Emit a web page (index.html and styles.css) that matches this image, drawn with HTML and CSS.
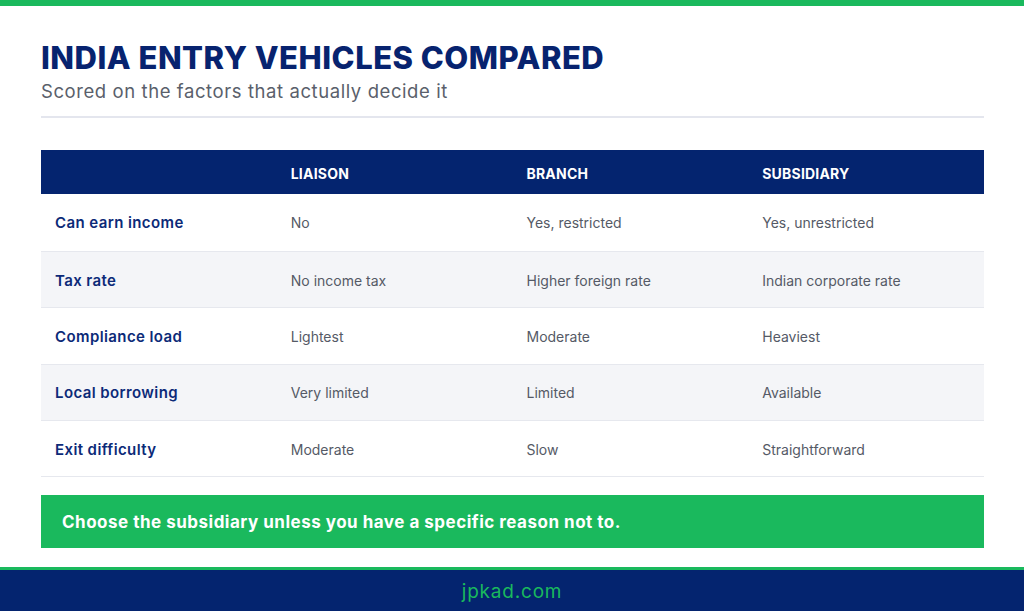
FILE: index.html
```html
<!DOCTYPE html>
<html lang="en">
<head>
<meta charset="utf-8">
<title>India Entry Vehicles Compared</title>
<link rel="stylesheet" href="styles.css">
</head>
<body>
<div class="page">
  <div class="topbar"></div>
  <main class="content">
    <header class="head">
      <h1 class="title">INDIA ENTRY VEHICLES COMPARED</h1>
      <p class="subtitle">Scored on the factors that actually decide it</p>
    </header>
    <table class="grid">
      <thead>
        <tr><th></th><th>LIAISON</th><th>BRANCH</th><th>SUBSIDIARY</th></tr>
      </thead>
      <tbody>
        <tr><td class="label">Can earn income</td><td>No</td><td>Yes, restricted</td><td>Yes, unrestricted</td></tr>
        <tr><td class="label">Tax rate</td><td>No income tax</td><td>Higher foreign rate</td><td>Indian corporate rate</td></tr>
        <tr><td class="label">Compliance load</td><td>Lightest</td><td>Moderate</td><td>Heaviest</td></tr>
        <tr><td class="label">Local borrowing</td><td>Very limited</td><td>Limited</td><td>Available</td></tr>
        <tr><td class="label">Exit difficulty</td><td>Moderate</td><td>Slow</td><td>Straightforward</td></tr>
      </tbody>
    </table>
    <div class="callout">Choose the subsidiary unless you have a specific reason not to.</div>
  </main>
  <footer class="footer">jpkad.com</footer>
</div>
</body>
</html>
```

FILE: styles.css
```css
* { box-sizing: border-box; }
html, body { margin: 0; padding: 0; background: #ffffff; }
body { font-family: Inter, "Noto Sans", sans-serif; }
.page { width: 1024px; height: 611px; display: flex; flex-direction: column; overflow: hidden; }
.topbar { height: 6px; background: #1ab95d; flex: none; }
.content { padding: 0 40px 0 41px; flex: 1; }
.head { padding-top: 33px; padding-bottom: 13px; border-bottom: 2px solid #e4e6ee; }
.title { margin: 0; font-size: 31px; line-height: 38px; font-weight: 800; color: #07236f; letter-spacing: 0.5px; }
.subtitle { margin: 2px 0 0; font-size: 18.5px; line-height: 24px; color: #5a5f6b; font-weight: 400; letter-spacing: 0.58px; }
.grid { margin-top: 32px; width: 943px; border-collapse: collapse; table-layout: fixed; }
.grid th { background: #04246f; color: #ffffff; font-size: 14px; font-weight: 700; text-align: left; height: 44px; padding: 3px 14px 0; letter-spacing: 0.2px; }
.grid td { height: 56.4px; padding: 1px 14px 0; font-size: 14px; color: #555a66; border-bottom: 1px solid #e6e8ee; }
.grid tbody tr:first-child td { height: 57.4px; }
.grid tbody tr:nth-child(even) td { background: #f4f5f8; }
.grid td.label { font-size: 15px; font-weight: 600; color: #0c2a78; letter-spacing: 0.4px; }
.callout { margin-top: 18px; height: 53px; background: #1ab95d; color: #ffffff; font-size: 17px; font-weight: 700; display: flex; align-items: center; padding: 1px 21px 0; letter-spacing: 0.5px; }
.footer { flex: none; height: 44px; border-top: 3px solid #1ab95d; background: #04246f; color: #1ab95d; font-size: 19px; display: flex; align-items: center; justify-content: center; letter-spacing: 0.8px; padding-top: 2px; }
```
